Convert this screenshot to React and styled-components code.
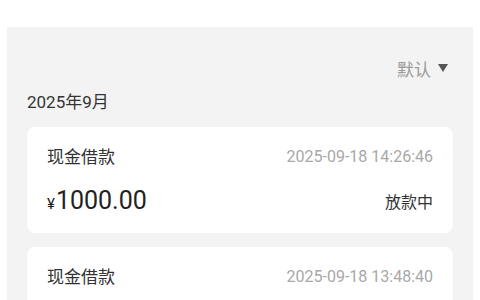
import React from 'react';
import styled, { createGlobalStyle } from 'styled-components';

const GlobalStyle = createGlobalStyle`
  html, body {
    margin: 0;
    padding: 0;
    background: #ffffff;
    font-family: 'Roboto', 'Noto Sans CJK SC', sans-serif;
  }
`;

const Page = styled.div`
  width: 480px;
  height: 300px;
  overflow: hidden;
  background: #fff;
`;

const Header = styled.div`
  height: 27px;
  overflow: hidden;
  padding-left: 25px;
`;

const HeaderText = styled.div`
  margin-top: -18px;
  font-size: 15px;
  line-height: 20px;
  color: #e4e4e4;
  word-spacing: 10px;
`;

const Panel = styled.div`
  margin: 0 7px;
  background: #f3f3f3;
  padding: 30px 20px 0;
  min-height: 300px;
`;

const SortRow = styled.div`
  display: flex;
  justify-content: flex-end;
  align-items: center;
  gap: 7px;
  height: 22px;
  padding-right: 5px;
  font-size: 17px;
  color: #9a9a9a;
`;

const Caret = styled.span`
  width: 0;
  height: 0;
  border-left: 5.5px solid transparent;
  border-right: 5.5px solid transparent;
  border-top: 8px solid #555;
`;

const Month = styled.div`
  margin-top: 12px;
  font-size: 17px;
  line-height: 22px;
  color: #333;
`;

const List = styled.div`
  display: flex;
  flex-direction: column;
  gap: 14px;
  margin-top: 14px;
`;

const Card = styled.div`
  background: #fff;
  border-radius: 8px;
  padding: 19px 20px 14px;
`;

const Row = styled.div`
  display: flex;
  justify-content: space-between;
  align-items: center;
  margin-top: ${({ $gap }) => $gap || 0}px;
`;

const Title = styled.span`
  font-size: 17px;
  line-height: 22px;
  color: #333;
`;

const Time = styled.span`
  font-size: 16px;
  line-height: 22px;
  color: #a8a8a8;
`;

const Amount = styled.span`
  font-size: 25px;
  line-height: 30px;
  color: #222;
  display: flex;
  align-items: baseline;
`;

const Yen = styled.span`
  font-size: 15px;
  margin-right: 1px;
`;

const Status = styled.span`
  font-size: 16px;
  line-height: 30px;
  color: #333;
`;

const records = [
  { title: '现金借款', time: '2025-09-18 14:26:46', amount: '1000.00', status: '放款中' },
  { title: '现金借款', time: '2025-09-18 13:48:40', amount: '1000.00', status: '放款中' },
];

export default function App() {
  return (
    <Page>
      <GlobalStyle />
      <Header>
        <HeaderText>〈 借款记录 还款记录 全部</HeaderText>
      </Header>
      <Panel>
        <SortRow>
          默认 <Caret />
        </SortRow>
        <Month>2025年9月</Month>
        <List>
          {records.map((r, i) => (
            <Card key={i}>
              <Row>
                <Title>{r.title}</Title>
                <Time>{r.time}</Time>
              </Row>
              <Row $gap={18}>
                <Amount>
                  <Yen>¥</Yen>
                  {r.amount}
                </Amount>
                <Status>{r.status}</Status>
              </Row>
            </Card>
          ))}
        </List>
      </Panel>
    </Page>
  );
}
